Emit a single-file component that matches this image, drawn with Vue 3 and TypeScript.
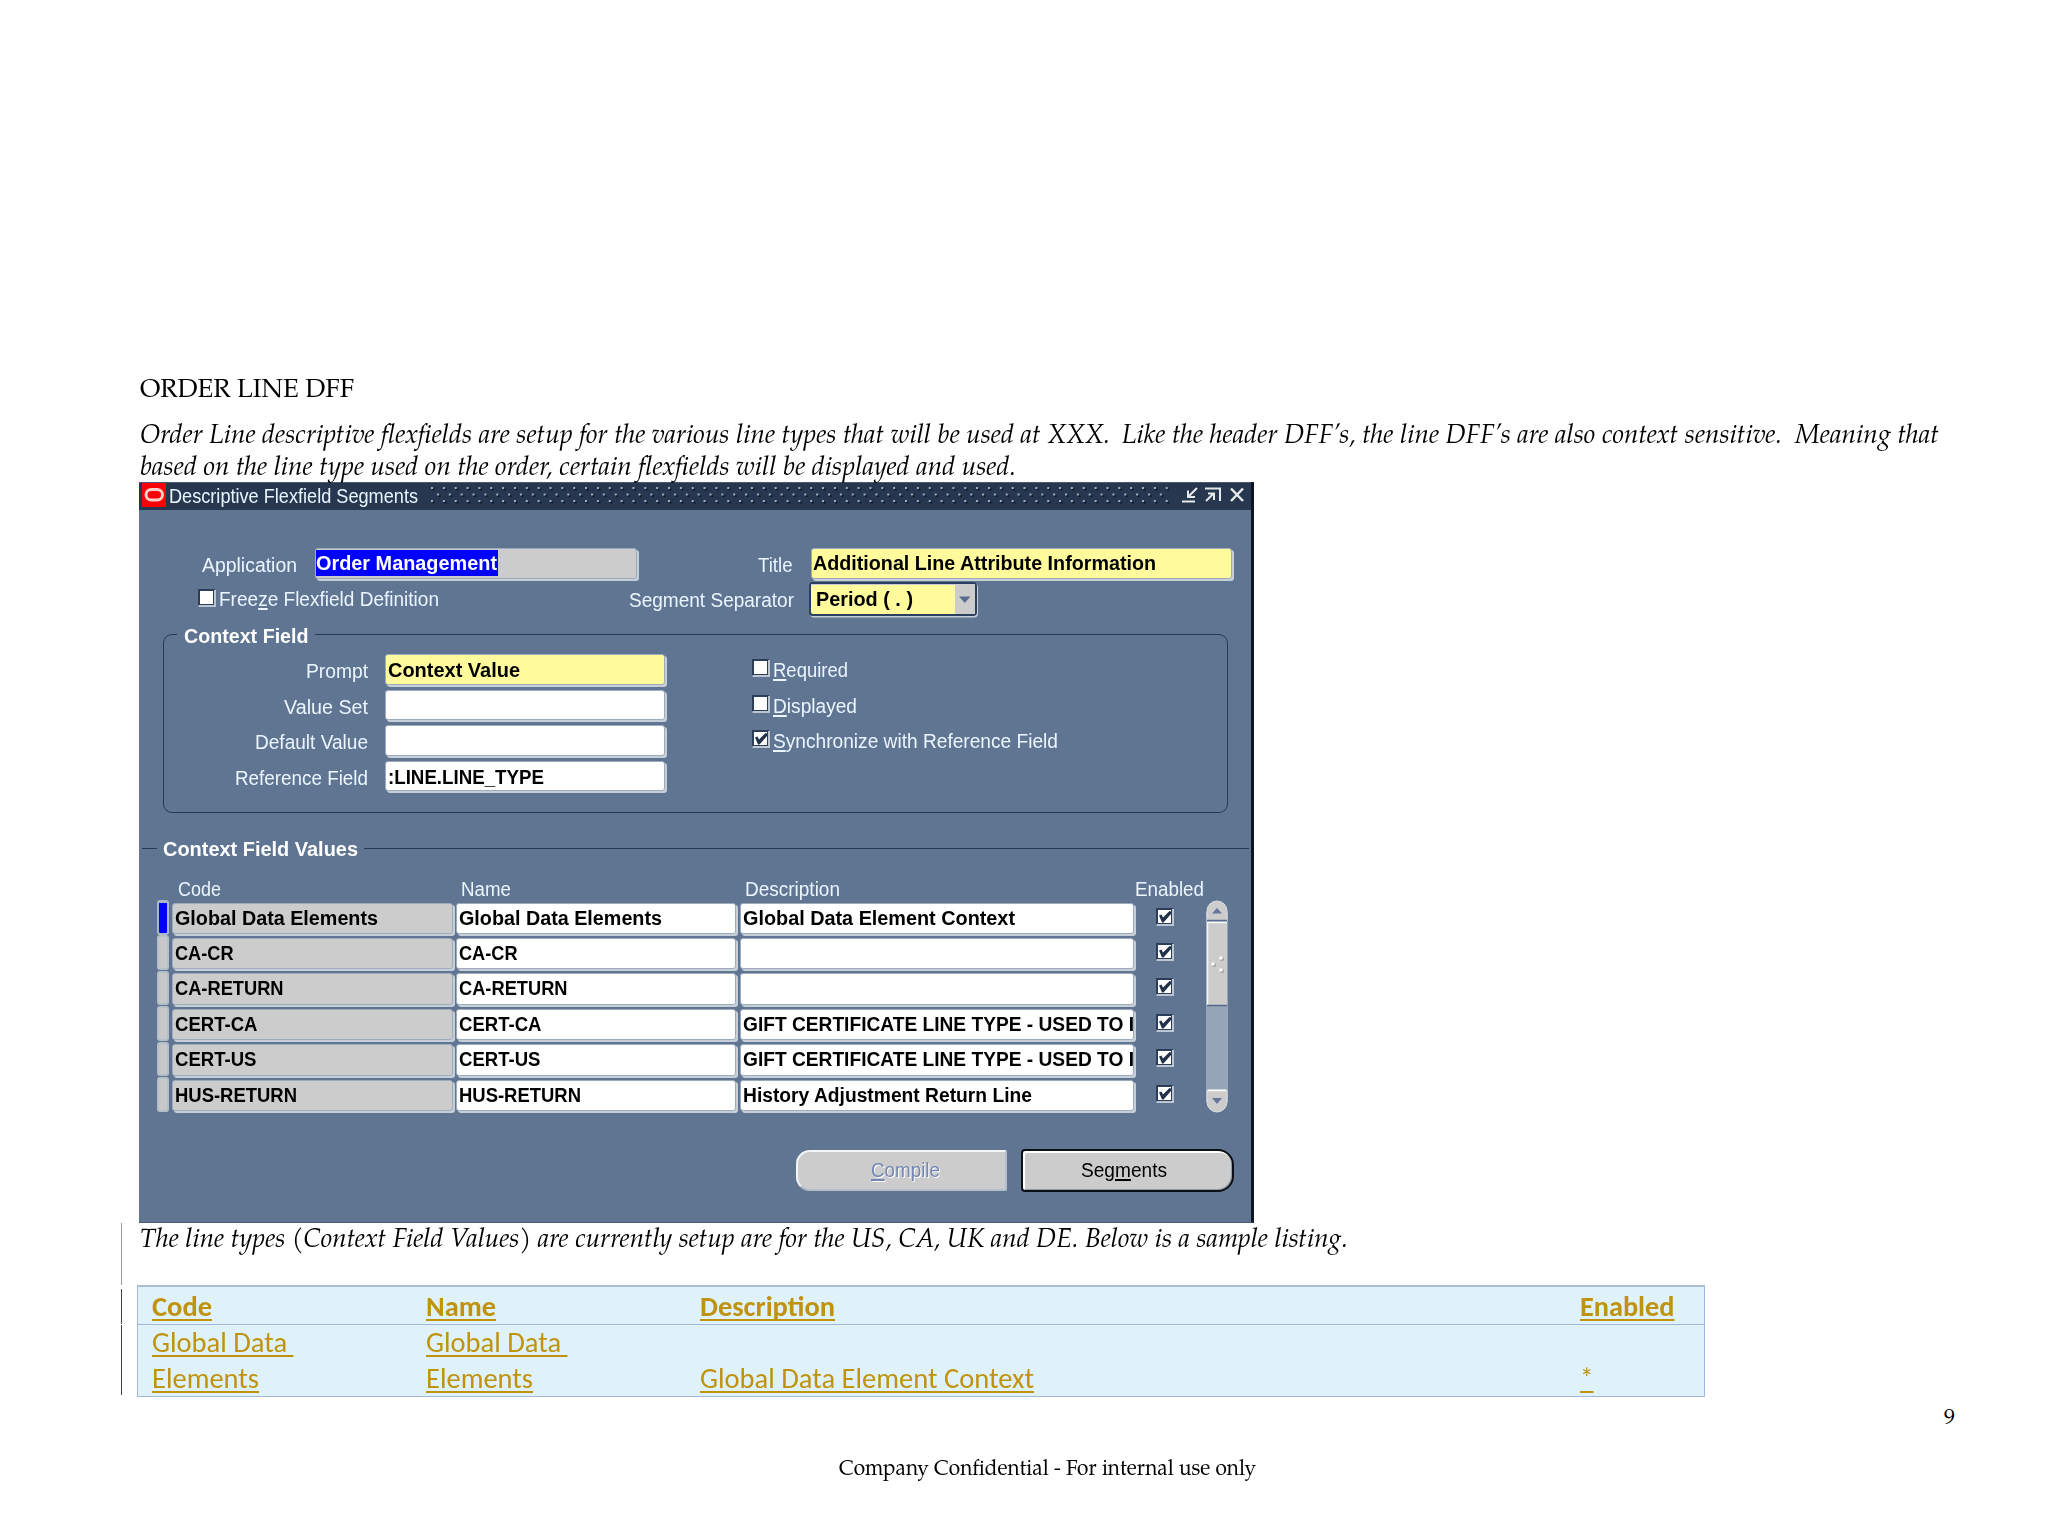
<script setup lang="ts">
import type { Directive } from 'vue'

interface ContextRow {
  code: string
  codeWidth: number
  name: string
  description: string
  descriptionWidth: number
}

// Stretches a run of text to the given width in pixels.
const vFit: Directive<HTMLElement, number> = {
  mounted(el, binding) {
    const natural = el.getBoundingClientRect().width
    if (!natural) return
    el.style.transform = `scaleX(${binding.value / natural})`
    el.style.marginRight = `${binding.value - natural}px`
  },
}

const rows: ContextRow[] = [
  { code: 'Global Data Elements', codeWidth: 203, name: 'Global Data Elements', description: 'Global Data Element Context', descriptionWidth: 272 },
  { code: 'CA-CR', codeWidth: 58.5, name: 'CA-CR', description: '', descriptionWidth: 0 },
  { code: 'CA-RETURN', codeWidth: 108.5, name: 'CA-RETURN', description: '', descriptionWidth: 0 },
  { code: 'CERT-CA', codeWidth: 82.5, name: 'CERT-CA', description: 'GIFT CERTIFICATE LINE TYPE - USED TO I', descriptionWidth: 391 },
  { code: 'CERT-US', codeWidth: 81.5, name: 'CERT-US', description: 'GIFT CERTIFICATE LINE TYPE - USED TO I', descriptionWidth: 391 },
  { code: 'HUS-RETURN', codeWidth: 122, name: 'HUS-RETURN', description: 'History Adjustment Return Line', descriptionWidth: 289 },
]

const prompts = [
  { label: 'Prompt', labelWidth: 62, value: 'Context Value', valueWidth: 132, required: true },
  { label: 'Value Set', labelWidth: 84, value: '', valueWidth: 0, required: false },
  { label: 'Default Value', labelWidth: 113, value: '', valueWidth: 0, required: false },
  { label: 'Reference Field', labelWidth: 133, value: ':LINE.LINE_TYPE', valueWidth: 156, required: false },
]

const options = [
  { key: 'R', rest: 'equired', width: 75, checked: false },
  { key: 'D', rest: 'isplayed', width: 84, checked: false },
  { key: 'S', rest: 'ynchronize with Reference Field', width: 285, checked: true },
]
</script>

<template>
  <main class="page">
    <h1 class="heading"><span v-fit="214" class="fit">ORDER LINE DFF</span></h1>
    <p class="prose">
      <span v-fit="970" class="fit">Order Line descriptive flexfields are setup for the various line types that will be used at XXX.</span>
      <span v-fit="660" class="fit second">Like the header DFF’s, the line DFF’s are also context sensitive.</span>
      <span v-fit="144" class="fit third">Meaning that</span>
    </p>
    <p class="prose"><span v-fit="876" class="fit">based on the line type used on the order, certain flexfields will be displayed and used.</span></p>

    <section class="window">
      <header class="titlebar">
        <svg class="logo" width="24" height="24" viewBox="0 0 24 24">
          <rect width="24" height="24" fill="#fb0007" />
          <rect x="4" y="6.500" width="16.500" height="10.500" rx="5.250" fill="none" stroke="#ffd0cc" stroke-width="3" />
        </svg>
        <span class="title"><span v-fit="249" class="fit">Descriptive Flexfield Segments</span></span>
        <svg class="grip" width="740" height="18">
          <defs>
            <pattern id="dots" width="11.850" height="18" patternUnits="userSpaceOnUse">
              <g fill="#0d1522">
                <rect x="1.500" y="1.500" width="2" height="2" /><rect x="7.500" y="8" width="2" height="2" />
                <rect x="1.500" y="14.500" width="2" height="2" />
              </g>
              <g fill="#9fb0c4">
                <rect x="0" y="0" width="2" height="2" /><rect x="6" y="6.500" width="2" height="2" />
                <rect x="0" y="13" width="2" height="2" />
              </g>
            </pattern>
          </defs>
          <rect width="740" height="18" fill="url(#dots)" />
        </svg>
        <svg class="controls" width="64" height="18" viewBox="0 0 64 18" fill="none" stroke="#e6e9ea" stroke-width="2">
          <path d="M0 15.500H13M15 2L7 10M6 4.500V11H13" />
          <path d="M23 2.500H38V15M24 15L31 8M26 7.500H32V14" />
          <path d="M49 2.500L61 15M61 2.500L49 15" stroke-width="2.500" />
        </svg>
      </header>

      <div class="line first-line">
        <span class="label application"><span v-fit="95" class="fit">Application</span></span>
        <span class="field app-field"><span class="selected"><span v-fit="181" class="fit">Order Management</span></span></span>
        <span class="label title-label"><span v-fit="34.500" class="fit">Title</span></span>
        <span class="field yellow title-field"><span v-fit="343" class="fit">Additional Line Attribute Information</span></span>
      </div>

      <div class="line second-line">
        <svg class="check freeze" width="18" height="18"><use href="#box" /></svg>
        <span class="label freeze-label"><span v-fit="220" class="fit">Free<u>z</u>e Flexfield Definition</span></span>
        <span class="label separator-label"><span v-fit="165" class="fit">Segment Separator</span></span>
        <span class="select">
          <span class="select-value"><span v-fit="97" class="fit">Period ( . )</span></span>
          <span class="select-arrow"><svg width="12" height="8"><path d="M0 0.500H11.500L5.750 7Z" fill="#5d6c8c" /></svg></span>
        </span>
      </div>

      <div class="group">
        <span class="legend"><span v-fit="124.500" class="fit">Context Field</span></span>
        <div class="prompts">
          <div v-for="p in prompts" :key="p.label" class="prompt">
            <span class="label prompt-label"><span v-fit="p.labelWidth" class="fit">{{ p.label }}</span></span>
            <span class="field prompt-field" :class="{ yellow: p.required }"><span v-if="p.value" v-fit="p.valueWidth" class="fit">{{ p.value }}</span></span>
          </div>
        </div>
        <div class="options">
          <div v-for="o in options" :key="o.key" class="option">
            <svg class="check" width="18" height="18"><use :href="o.checked ? '#box-on' : '#box'" /></svg>
            <span class="label option-label"><span v-fit="o.width" class="fit"><u>{{ o.key }}</u>{{ o.rest }}</span></span>
          </div>
        </div>
      </div>

      <div class="divider">
        <i class="rule rule-left"></i>
        <span class="section"><span v-fit="195" class="fit">Context Field Values</span></span>
        <i class="rule rule-right"></i>
      </div>

      <div class="heads">
        <span class="label head-code"><span v-fit="43" class="fit">Code</span></span>
        <span class="label head-name"><span v-fit="50" class="fit">Name</span></span>
        <span class="label head-description"><span v-fit="95" class="fit">Description</span></span>
        <span class="label"><span v-fit="69" class="fit">Enabled</span></span>
      </div>

      <div class="records">
        <div class="record-list">
          <div v-for="(r, i) in rows" :key="r.code" class="record">
            <i class="marker" :class="{ current: i === 0 }"></i>
            <span class="field cell gray"><span v-fit="r.codeWidth" class="fit">{{ r.code }}</span></span>
            <span class="field cell"><span v-fit="r.codeWidth" class="fit">{{ r.name }}</span></span>
            <span class="field cell wide"><span v-if="r.description" v-fit="r.descriptionWidth" class="fit">{{ r.description }}</span></span>
            <svg class="check enabled" width="18" height="18"><use href="#box-on" /></svg>
          </div>
        </div>
        <svg class="scrollbar" width="22" height="213" viewBox="0 0 22 213">
          <rect y="12" width="22" height="190" fill="#96a5b8" />
          <path d="M1 21V11A10 10 0 0 1 21 11V21Z" fill="#ccc" stroke="#dde1e4" />
          <path d="M1 190H21V202A10 10 0 0 1 1 202Z" fill="#ccc" stroke="#dde1e4" />
          <rect x="1" y="22" width="20" height="83" fill="#ccc" />
          <path d="M1.500 105V22.500H21" fill="none" stroke="#f4f6f7" stroke-width="1.500" />
          <path d="M1 20.500H21M1 105.500H21" stroke="#55698a" stroke-width="1.500" />
          <path d="M2 190.500H20" stroke="#fff" stroke-width="1.500" />
          <path d="M6 13.500H16L11 8ZM6 198H16L11 204Z" fill="#66759b" />
          <g fill="#9ba0a6"><circle cx="16" cy="59" r="2" /><circle cx="8" cy="65" r="2" /><circle cx="16" cy="71" r="2" /></g>
          <g fill="#fff"><circle cx="15" cy="58" r="1.800" /><circle cx="7" cy="64" r="1.800" /><circle cx="15" cy="70" r="1.800" /></g>
        </svg>
      </div>

      <div class="buttons">
        <button class="button compile" type="button"><span v-fit="69" class="fit"><u>C</u>ompile</span></button>
        <button class="button segments" type="button"><span v-fit="86" class="fit">Seg<u>m</u>ents</span></button>
      </div>
    </section>

    <p class="prose caption"><span v-fit="1208" class="fit">The line types (Context Field Values) are currently setup are for the US, CA, UK and DE. Below is a sample listing.</span></p>

    <div class="listing-wrap">
      <div class="bars"><i class="bar pale"></i><i class="bar short"></i><i class="bar tall"></i></div>
      <div class="listing">
        <div class="listing-row listing-head">
          <span class="col"><b v-fit="60" class="fit">Code</b></span>
          <span class="col"><b v-fit="70" class="fit">Name</b></span>
          <span class="col col-wide"><b v-fit="135" class="fit">Description</b></span>
          <span class="col"><b v-fit="94.500" class="fit">Enabled</b></span>
        </div>
        <div class="listing-row listing-body">
          <span class="col"><span v-fit="141.500" class="fit">Global Data&nbsp;</span><br /><span v-fit="107" class="fit">Elements</span></span>
          <span class="col"><span v-fit="141.500" class="fit">Global Data&nbsp;</span><br /><span v-fit="107" class="fit">Elements</span></span>
          <span class="col col-wide"><span v-fit="334" class="fit">Global Data Element Context</span></span>
          <span class="col"><span v-fit="13.500" class="fit">*</span></span>
        </div>
      </div>
    </div>

    <div class="page-number">9</div>
    <footer class="footer"><span v-fit="417" class="fit">Company Confidential - For internal use only</span></footer>

    <svg class="symbols" width="0" height="0">
      <symbol id="box" viewBox="0 0 18 18">
        <rect width="17" height="17" fill="#2c3d58" />
        <path d="M0.500 17H17V1" fill="none" stroke="#bcc6d2" stroke-width="2" />
        <rect x="2" y="2" width="13" height="13" fill="#fff" />
      </symbol>
      <symbol id="box-on" viewBox="0 0 18 18">
        <rect width="17" height="17" fill="#2c3d58" />
        <path d="M0.500 17H17V1" fill="none" stroke="#bcc6d2" stroke-width="2" />
        <rect x="2" y="2" width="13" height="13" fill="#fff" />
        <path d="M3 7.500L5.500 6.500L7 9.500L13.500 3L15 3.500V6L7.500 14.500H6Z" fill="#22314a" />
      </symbol>
    </svg>
  </main>
</template>

<style>
html,
body {
  margin: 0;
  background: #fff;
}
</style>

<style scoped>
.page {
  box-sizing: border-box;
  width: 2048px;
  height: 1536px;
  padding-top: 373px;
  padding-left: 139px;
  overflow: hidden;
  background: #fff;
  color: #000;
  font-family: 'Palatino Linotype', 'Book Antiqua', Palatino, 'TeX Gyre Pagella', P052, 'Liberation Serif', serif;
}
.fit {
  display: inline-block;
  transform-origin: 0 50%;
  white-space: nowrap;
}
.heading {
  margin: 0 0 16px;
  height: 30px;
  padding-left: 0.500px;
  font-size: 26px;
  font-weight: 400;
  line-height: 36px;
}
.prose {
  display: flex;
  margin: 0;
  height: 31.500px;
  padding-left: 1px;
  font-size: 26.500px;
  font-style: italic;
  line-height: 37px;
}
.second {
  margin-left: 12px;
}
.third {
  margin-left: 13px;
}
.caption {
  height: 62px;
  line-height: 36px;
}

.window {
  box-sizing: border-box;
  width: 1115px;
  height: 740.500px;
  border-right: 3px solid #10151f;
  border-bottom: 1px solid #4a5c76;
  background: #607592;
  color: #eaf5ff;
  font-family: 'Liberation Sans', Arial, sans-serif;
  font-size: 19.500px;
}
.titlebar {
  display: flex;
  box-sizing: border-box;
  height: 28px;
  border-top: 1px solid #4b5a70;
  background: #26374f;
}
.logo {
  margin-left: 2.500px;
}
.title {
  margin-left: 3.500px;
  width: 262px;
  line-height: 26px;
}
.grip {
  margin-top: 4px;
}
.controls {
  margin: 3px 0 0 11px;
}
.line {
  display: flex;
}
.first-line {
  margin-top: 38px;
  height: 34px;
}
.second-line {
  height: 34px;
}
.label {
  line-height: 34px;
  white-space: nowrap;
}
.label u,
.button u {
  text-decoration-thickness: 1.500px;
  text-underline-offset: 2px;
}
.application {
  margin-left: 63px;
  width: 112.500px;
}
.field {
  box-sizing: border-box;
  height: 30.500px;
  padding-left: 2px;
  overflow: clip;
  border: 1px solid #9eabbc;
  border-radius: 3px;
  background: #fff;
  box-shadow: 2px 2px 0 #c6ced7;
  color: #000;
  font-weight: 700;
  line-height: 29px;
  white-space: nowrap;
}
.yellow {
  background: #fffa9b;
}
.gray {
  background: #ccc;
}
.app-field {
  width: 322px;
  padding-left: 0.500px;
  background: #ccc;
}
.selected {
  display: block;
  width: 181.500px;
  height: 26px;
  margin-top: 1px;
  background: #0000fe;
  color: #fff;
  line-height: 27px;
}
.title-label {
  margin-left: 121.500px;
  width: 53px;
}
.title-field {
  width: 421px;
  padding-left: 1px;
}
.freeze {
  margin: 7px 0 0 59px;
}
.freeze-label {
  width: 410px;
  margin-left: 3px;
  line-height: 34px;
}
.separator-label {
  width: 180px;
  line-height: 37px;
}
.select {
  display: flex;
  box-sizing: border-box;
  width: 168px;
  height: 34px;
  border: 2px solid #2b3f5f;
  border-radius: 4px;
  background: #fffa9b;
  box-shadow: 1px 1.500px 0 #c6ced7;
  color: #000;
  font-weight: 700;
  line-height: 29px;
}
.select-value {
  width: 138.500px;
  padding-left: 5px;
  border-top: 1px solid #c8cdd2;
}
.select-arrow {
  flex: 1;
  padding-left: 4.500px;
  background: #ccc;
  line-height: 26px;
}
.group {
  position: relative;
  box-sizing: border-box;
  display: flex;
  width: 1065px;
  height: 179px;
  margin: 17.500px 0 0 23.500px;
  padding-top: 19.500px;
  border: 1.800px solid #27395a;
  border-radius: 9px;
}
.legend {
  position: absolute;
  top: -10px;
  left: 13px;
  padding: 0 6px 0 7.500px;
  background: #607592;
  color: #fff;
  font-size: 20px;
  font-weight: 700;
  line-height: 22px;
}
.prompts {
  width: 588px;
}
.prompt {
  display: flex;
  height: 35.500px;
}
.prompt-label {
  width: 204px;
  margin-right: 17.500px;
  line-height: 35px;
  text-align: right;
}
.prompt-field {
  width: 279.500px;
  line-height: 30px;
}
.option {
  display: flex;
  height: 35.500px;
}
.option .check {
  margin-top: 5px;
}
.option-label {
  margin-left: 3.500px;
  line-height: 33px;
}
.divider {
  display: flex;
  align-items: center;
  margin-top: 24px;
  height: 24px;
}
.rule {
  height: 1.800px;
  background: #27395a;
}
.rule-left {
  width: 15px;
  margin-left: 2.500px;
}
.rule-right {
  width: 885px;
}
.section {
  width: 201px;
  padding-left: 6.500px;
  color: #fff;
  font-size: 20px;
  font-weight: 700;
  line-height: 24px;
}
.heads {
  display: flex;
  margin-top: 16px;
  padding-left: 38.500px;
  height: 23.500px;
}
.heads .label {
  line-height: 24.500px;
}
.head-code {
  width: 283.500px;
}
.head-name {
  width: 284px;
}
.head-description {
  width: 390px;
}
.records {
  display: flex;
  height: 248.500px;
  padding-left: 18px;
}
.record {
  display: flex;
  height: 35.450px;
}
.marker {
  box-sizing: border-box;
  width: 11.500px;
  height: 34.500px;
  margin-right: 3.500px;
  border: 2px solid #b3bec9;
  border-radius: 3px;
  background: #c6c8ca;
}
.current {
  border-color: #a9b8cb;
  border-top-width: 3px;
  background: #0000fe;
}
.cell {
  width: 280px;
  height: 31.500px;
  margin: 2.500px 3.500px 0 0;
  line-height: 29px;
}
.cell.gray {
  padding-left: 1.500px;
  width: 280.500px;
}
.wide {
  width: 394px;
}
.record .enabled {
  margin: 7.500px 0 0 19px;
}
.scrollbar {
  margin-left: 31.500px;
}
.buttons {
  display: flex;
  padding-left: 657px;
}
.button {
  box-sizing: border-box;
  width: 210.500px;
  height: 41px;
  padding: 0;
  border: 2px solid #dfe3e6;
  background: #ccc;
  color: #000;
  font: 19.500px/37px 'Liberation Sans', Arial, sans-serif;
}
.compile {
  margin-top: 1px;
  padding-left: 9px;
  border-color: #f3f5f6 #b5bfca #b5bfca #f3f5f6;
  border-radius: 14px 2px 2px 14px;
  color: #7387b0;
  text-shadow: 1px 1px 0 #fff;
}
.segments {
  width: 213.500px;
  height: 43px;
  margin-left: 14px;
  padding-right: 7px;
  border-color: #0c0f14;
  border-radius: 4px 16px 16px 4px;
  box-shadow: inset 2px 2px 0 #fff, inset -1px -1px 0 #8f9aab;
}

.listing-wrap {
  display: flex;
  height: 112px;
  margin-left: -19px;
}
.bars {
  width: 17px;
  height: 172px;
  margin-top: -62px;
}
.bar {
  display: block;
  width: 1.500px;
  margin-left: 0.500px;
  background: #444;
}
.pale {
  height: 62px;
  background: #999;
}
.short {
  height: 35px;
  margin-top: 4px;
}
.tall {
  height: 70px;
  margin-top: 1px;
}
.listing {
  box-sizing: border-box;
  width: 1568px;
  height: 112px;
  border: 1.800px solid #a2b6dc;
  border-top: 2px solid #a9c0d4;
  background: #dff1f9;
  color: #c0930e;
  font-family: Carlito, Lato, sans-serif;
  font-size: 28.400px;
  line-height: 35.500px;
}
.listing-row {
  display: flex;
  padding-left: 13.500px;
}
.listing-row .fit {
  text-decoration: underline;
  text-decoration-thickness: 2px;
  text-decoration-skip-ink: none;
  text-underline-offset: 3px;
}
.listing-head {
  box-sizing: border-box;
  height: 38.500px;
  padding-top: 2px;
  border-bottom: 1.800px solid #a2b6dc;
}
.listing-body {
  align-items: flex-end;
}
.col {
  flex: none;
  width: 274px;
}
.col-wide {
  width: 880px;
}
.page-number {
  margin: 6px 0 0 1805px;
  font-size: 22px;
  line-height: 32px;
}
.footer {
  margin: 19px 0 0 699.500px;
  font-size: 22px;
  line-height: 32px;
}
.symbols {
  display: block;
}
</style>
